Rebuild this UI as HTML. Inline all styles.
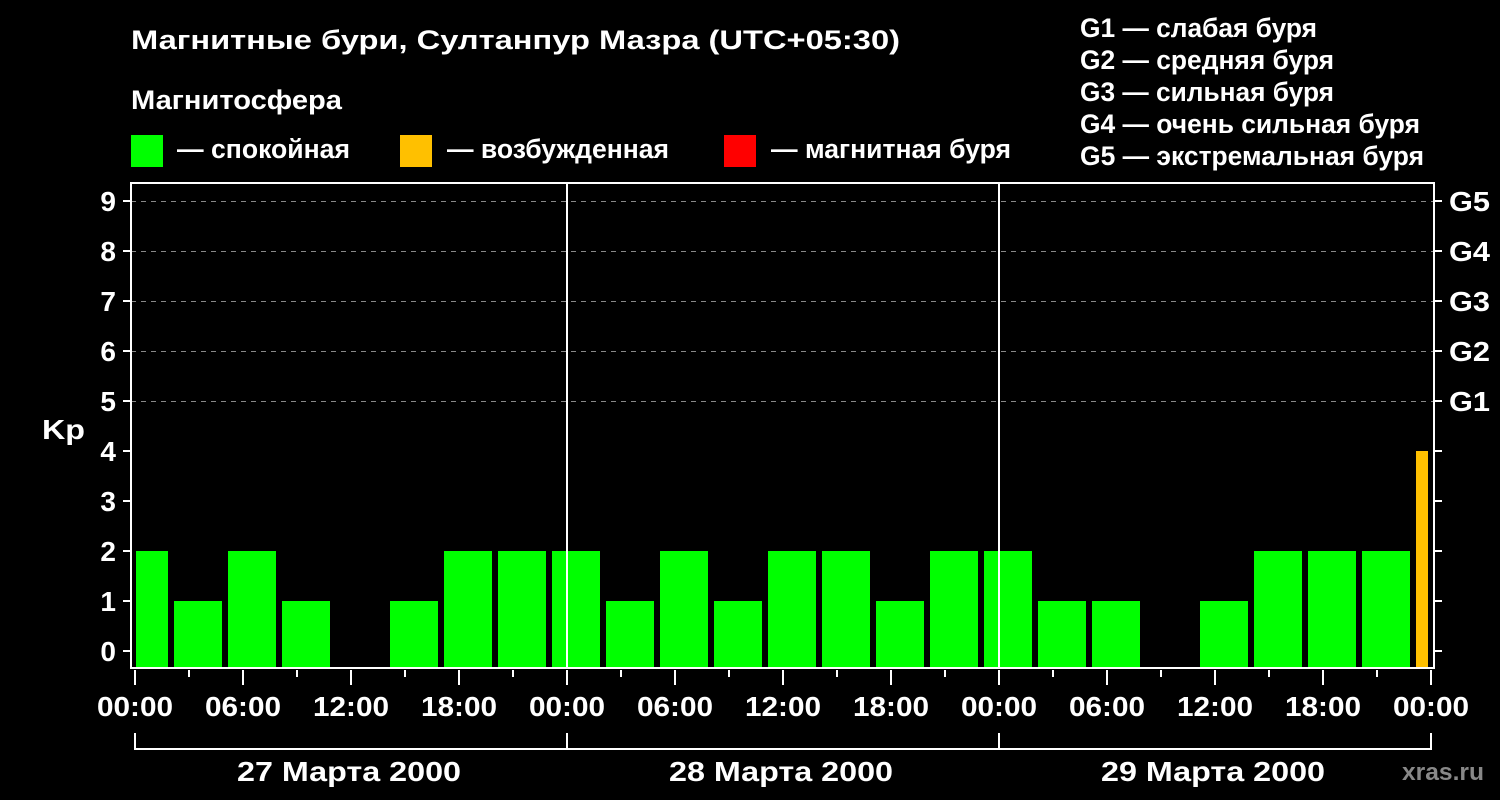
<!DOCTYPE html><html><head><meta charset="utf-8"><style>body{margin:0;background:#000}svg{display:block}text{font-family:"Liberation Sans",Arial,sans-serif;font-weight:bold;fill:#fff}</style></head><body>
<svg width="1500" height="800" xmlns="http://www.w3.org/2000/svg">
<rect width="1500" height="800" fill="#000"/>
<g font-size="27">
<text x="131" y="49" textLength="769" lengthAdjust="spacingAndGlyphs">Магнитные бури, Султанпур Мазра (UTC+05:30)</text>
<text x="131" y="109" textLength="211" lengthAdjust="spacingAndGlyphs">Магнитосфера</text>
<text x="177" y="158" textLength="173" lengthAdjust="spacingAndGlyphs">— спокойная</text>
<text x="447" y="158" textLength="222" lengthAdjust="spacingAndGlyphs">— возбужденная</text>
<text x="771" y="158" textLength="240" lengthAdjust="spacingAndGlyphs">— магнитная буря</text>
<text x="1080" y="37" textLength="237" lengthAdjust="spacingAndGlyphs">G1 — слабая буря</text>
<text x="1080" y="69" textLength="254" lengthAdjust="spacingAndGlyphs">G2 — средняя буря</text>
<text x="1080" y="101" textLength="254" lengthAdjust="spacingAndGlyphs">G3 — сильная буря</text>
<text x="1080" y="133" textLength="340" lengthAdjust="spacingAndGlyphs">G4 — очень сильная буря</text>
<text x="1080" y="165" textLength="344" lengthAdjust="spacingAndGlyphs">G5 — экстремальная буря</text>
</g>
<rect x="131" y="135" width="32" height="32" fill="#00ff00"/>
<rect x="400" y="135" width="32" height="32" fill="#ffc000"/>
<rect x="724" y="135" width="32" height="32" fill="#ff0000"/>
<g stroke="#888" stroke-dasharray="5,5" stroke-width="1"><line x1="131" x2="1434" y1="201.5" y2="201.5"/><line x1="131" x2="1434" y1="251.5" y2="251.5"/><line x1="131" x2="1434" y1="301.5" y2="301.5"/><line x1="131" x2="1434" y1="351.5" y2="351.5"/><line x1="131" x2="1434" y1="401.5" y2="401.5"/></g>
<g id="bars"></g>
<g stroke="#fff" stroke-width="2" fill="none">
<rect x="131" y="183" width="1303" height="485"/>
<line x1="567" x2="567" y1="183" y2="668"/><line x1="999" x2="999" y1="183" y2="668"/>
<path d="M135 733V749H1431V733M567 733V749M999 733V749"/>
</g>
<g id="ticks" stroke="#fff" stroke-width="2"></g>
<g font-size="28" text-anchor="end" id="yl"></g>
<text x="42" y="439" font-size="28" textLength="43" lengthAdjust="spacingAndGlyphs">Kp</text>
<g font-size="28"><text x="1449" y="211" textLength="41" lengthAdjust="spacingAndGlyphs">G5</text><text x="1449" y="261" textLength="41" lengthAdjust="spacingAndGlyphs">G4</text><text x="1449" y="311" textLength="41" lengthAdjust="spacingAndGlyphs">G3</text><text x="1449" y="361" textLength="41" lengthAdjust="spacingAndGlyphs">G2</text><text x="1449" y="411" textLength="41" lengthAdjust="spacingAndGlyphs">G1</text></g>
<g font-size="28" id="xl"></g>
<g font-size="28"><text x="237" y="781" textLength="224" lengthAdjust="spacingAndGlyphs">27 Марта 2000</text><text x="669" y="781" textLength="224" lengthAdjust="spacingAndGlyphs">28 Марта 2000</text><text x="1101" y="781" textLength="224" lengthAdjust="spacingAndGlyphs">29 Марта 2000</text></g>
<text x="1402" y="780" font-size="24" textLength="82" lengthAdjust="spacingAndGlyphs" style="fill:#888">xras.ru</text>
<script>
var ns="http://www.w3.org/2000/svg";function el(p,t,a,tx){var e=document.createElementNS(ns,t);for(var k in a)e.setAttribute(k,a[k]);if(tx)e.textContent=tx;document.getElementById(p).appendChild(e);}
var v=[2,1,2,1,0,1,2,2,2,1,2,1,2,2,1,2,2,1,1,0,1,2,2,2,4];
v.forEach(function(h,i){var x0=120+54*i,x1=x0+48;if(x0<136)x0=136;if(x1>1428)x1=1428;if(h>0)el("bars","rect",{x:x0,y:651-50*h,width:x1-x0,height:667-(651-50*h),fill:i==24?"#ffc000":"#00ff00"});});
for(var k=0;k<=9;k++){var y=651-50*k;el("ticks","line",{x1:123,x2:131,y1:y,y2:y});el("ticks","line",{x1:1434,x2:1442,y1:y,y2:y});el("yl","text",{x:116,y:y+10},String(k));}
var L=["00:00","06:00","12:00","18:00"];
for(var j=0;j<=24;j++){var x=135+54*j;var maj=j%2==0;el("ticks","line",{x1:x,x2:x,y1:670,y2:maj?685:677});if(maj)el("xl","text",{x:x-38,y:716,textLength:76,lengthAdjust:"spacingAndGlyphs"},L[(j/2)%4]);}
</script>
</svg></body></html>
